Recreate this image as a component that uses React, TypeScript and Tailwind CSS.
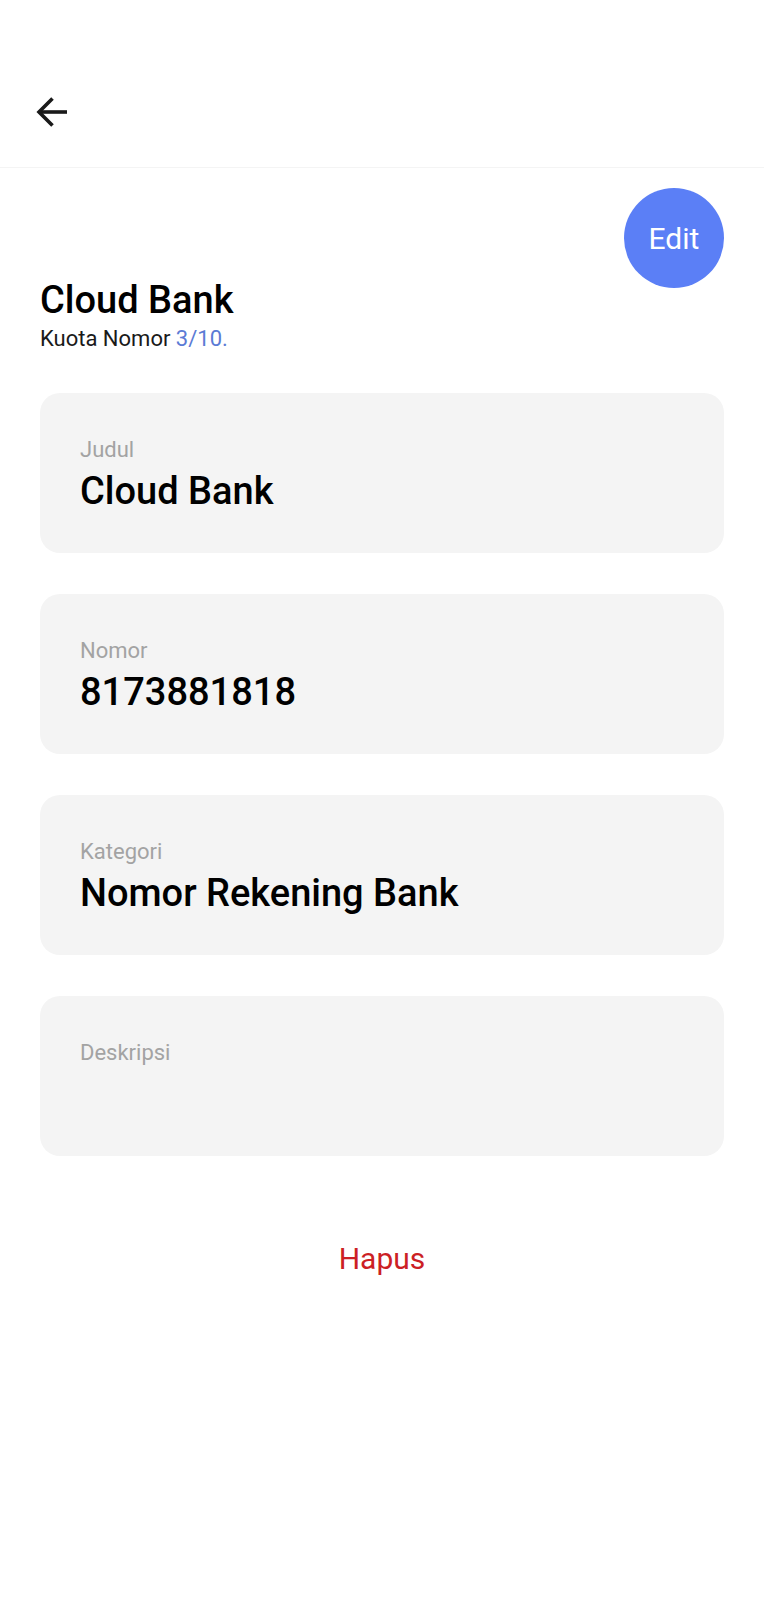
import React from "react";

function Field({ label, value }: { label: string; value?: string }) {
  return (
    <div className="h-[160px] rounded-[20px] bg-[#f4f4f4] px-[40px] pt-[44px]">
      <div className="text-[22px] leading-[26px] text-[#a3a3a3]">{label}</div>
      {value ? (
        <div className="mt-[6px] text-[38px] font-medium leading-[44px] text-black">{value}</div>
      ) : null}
    </div>
  );
}

export default function App() {
  return (
    <div className="min-h-[1600px] w-full bg-white font-['Roboto',sans-serif]">
      <div className="h-[168px] border-b border-[#f4f4f4] pl-[36px] pt-[96px]">
        <svg width="32" height="32" viewBox="0 0 32 32" fill="none" stroke="#1a1a1a" strokeWidth="3.6" strokeLinejoin="miter" strokeLinecap="butt">
          <path d="M31 16H4" />
          <path d="M16.5 2.5L3 16L16.5 29.5" />
        </svg>
      </div>
      <div className="px-[40px]">
        <div className="flex items-start justify-between pt-[20px]">
          <div className="pt-[90px]">
            <div className="text-[38px] font-medium leading-[44px] text-black">Cloud Bank</div>
            <div className="mt-[4px] text-[22px] leading-[26px] text-[#1a1a1a]">
              Kuota Nomor <span className="text-[#5b7bd5]">3/10.</span>
            </div>
          </div>
          <div className="flex h-[100px] w-[100px] items-center justify-center rounded-full bg-[#5b7ff6] pt-[2px] text-[30px] leading-[36px] text-white">
            Edit
          </div>
        </div>
        <div className="mt-[41px] flex flex-col gap-[41px]">
          <Field label="Judul" value="Cloud Bank" />
          <Field label="Nomor" value="8173881818" />
          <Field label="Kategori" value="Nomor Rekening Bank" />
          <Field label="Deskripsi" />
        </div>
        <div className="mt-[85px] text-center text-[30px] leading-[36px] text-[#cc1f25]">Hapus</div>
      </div>
    </div>
  );
}
